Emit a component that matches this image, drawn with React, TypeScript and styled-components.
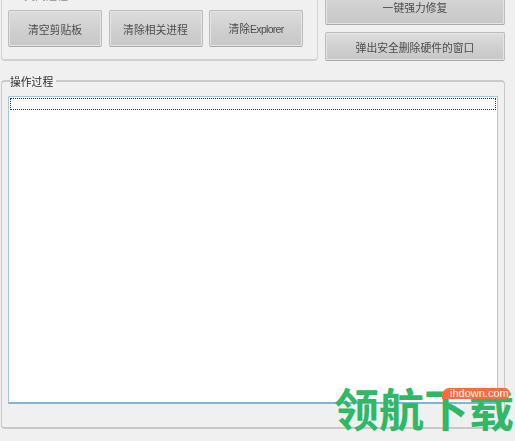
import React from "react";
import styled, { createGlobalStyle } from "styled-components";

const Global = createGlobalStyle`
  html, body { margin: 0; padding: 0; background: #f0f0f0; }
  body { width: 515px; height: 441px; overflow: hidden; font-family: "Noto Sans CJK SC", "Liberation Sans", sans-serif; }
`;

const Page = styled.div`
  position: relative;
  width: 515px;
  height: 441px;
  overflow: hidden;
  background: #f0f0f0;
  display: flex;
  flex-direction: column;
`;

const TopRow = styled.div`
  display: flex;
  height: 81px;
  flex: none;
  padding-left: 1px;
  box-sizing: border-box;
`;

const ToolPanel = styled.section`
  width: 317px;
  height: 61px;
  box-sizing: border-box;
  border: 1px solid #d3d3d3;
  border-top: none;
  border-bottom: 2px solid #d0d0d0;
  border-radius: 0 0 4px 4px;
  padding: 10px 0 0 6px;
  display: flex;
  flex-direction: column;
  position: relative;
`;

const ClippedLabel = styled.div`
  position: absolute;
  top: -11px;
  left: 8px;
  display: flex;
  align-items: center;
  gap: 4px;
  font-size: 11px;
  line-height: 12px;
  color: #8b8b8b;
  filter: blur(0.5px);
`;

const Tick = styled.span`
  width: 10px;
  height: 10px;
  border: 1px solid #a8c4d4;
  box-sizing: border-box;
`;

const ToolRow = styled.div`
  display: flex;
  gap: 6.5px;
`;

const Button = styled.button<{ $w: number; $h: number }>`
  width: ${(p) => p.$w}px;
  height: ${(p) => p.$h}px;
  flex: none;
  padding: 0;
  box-sizing: border-box;
  border: 1px solid #bcbcbc;
  border-bottom-color: #a9a9a9;
  border-radius: 2px;
  background: linear-gradient(#dddddd, #cfcfcf 55%, #c8c8c8);
  box-shadow: inset 0 0 0 1px #e4e4e4;
  font-family: "Noto Sans CJK SC", "Liberation Sans", sans-serif;
  font-size: 10.8px;
  line-height: 14px;
  color: #4c4c4c;
  filter: blur(0.3px);
`;

const Latin = styled.span`
  font-family: "Liberation Sans", sans-serif;
  font-size: 10.5px;
  letter-spacing: -0.7px;
`;

const SideColumn = styled.div`
  margin-left: 7px;
  margin-top: -12px;
  display: flex;
  flex-direction: column;
  gap: 7px;
`;

const LogGroup = styled.fieldset`
  margin: 0 0 0 1px;
  padding: 8px 6px 0 6px;
  width: 504px;
  height: 349px;
  box-sizing: border-box;
  border: 1px solid #c9c9c9;
  border-top-width: 2px;
  border-bottom-width: 2px;
  border-radius: 4px;
  position: relative;
  top: -1px;
`;

const Legend = styled.legend`
  padding: 0 3px 0 0;
  margin-left: 1px;
  position: absolute;
  top: -8px;
  left: 7px;
  background: #f0f0f0;
  font-size: 10.8px;
  line-height: 15px;
  color: #2c2c2c;
  filter: blur(0.2px);
`;

const LogBox = styled.div`
  width: 490px;
  height: 308px;
  box-sizing: border-box;
  margin-top: 6px;
  background: #fff;
  border: 1px solid #a3c9de;
  border-bottom: 2px solid #7fb5d6;
  padding: 1px;
`;

const LogRow = styled.div`
  height: 12px;
  box-sizing: border-box;
  border: 1px dotted #333;
`;

const Watermark = styled.div`
  position: absolute;
  left: 334px;
  top: 375px;
  font-family: "Noto Sans CJK SC", sans-serif;
  font-weight: 700;
  font-size: 45px;
  line-height: 66px;
  letter-spacing: 0;
  white-space: nowrap;
  color: #2fb866;
`;

const Badge = styled.div`
  position: absolute;
  left: 442px;
  top: 388px;
  width: 68px;
  height: 10.5px;
  box-sizing: border-box;
  padding-left: 8px;
  background: #ff6a3d;
  border-radius: 8px 6px 6px 0;
  font-family: "Liberation Sans", sans-serif;
  font-size: 11px;
  line-height: 11px;
  white-space: nowrap;
  color: #fff;
`;

export default function App() {
  return (
    <Page>
      <Global />
      <TopRow>
        <ToolPanel>
          <ClippedLabel>
            <Tick />
            <span>关闭进程</span>
          </ClippedLabel>
          <ToolRow>
            <Button $w={94} $h={37}>清空剪贴板</Button>
            <Button $w={94} $h={37}>清除相关进程</Button>
            <Button $w={94} $h={37}>清除<Latin>Explorer</Latin></Button>
          </ToolRow>
        </ToolPanel>
        <SideColumn>
          <Button $w={180} $h={37}>一键强力修复</Button>
          <Button $w={180} $h={29}>弹出安全删除硬件的窗口</Button>
        </SideColumn>
      </TopRow>
      <LogGroup>
        <Legend>操作过程</Legend>
        <LogBox>
          <LogRow />
        </LogBox>
      </LogGroup>
      <Watermark>领航下载</Watermark>
      <Badge>ihdown.com</Badge>
    </Page>
  );
}
